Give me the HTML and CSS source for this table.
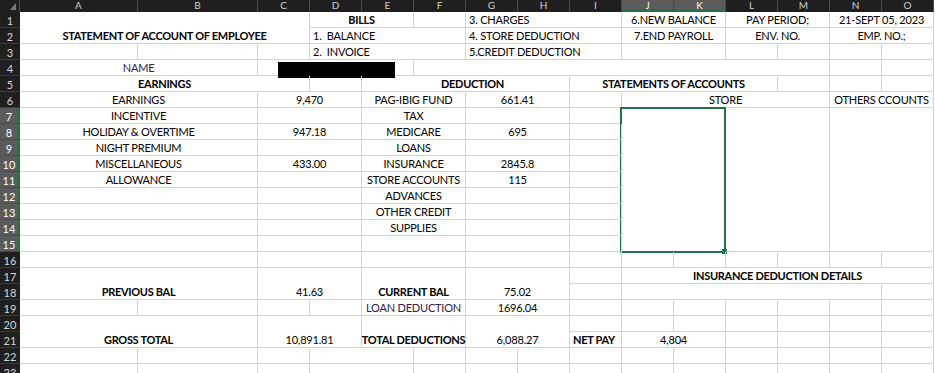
FILE: index.html
```html
<!DOCTYPE html>
<html>
<head>
<meta charset="utf-8">
<link rel="stylesheet" href="styles.css">
</head>
<body>
<div class="sheet">
  <!-- header row -->
  <div class="corner"></div>
  <div class="ch">A</div><div class="ch">B</div><div class="ch">C</div><div class="ch">D</div><div class="ch">E</div><div class="ch">F</div><div class="ch">G</div><div class="ch">H</div><div class="ch">I</div><div class="ch sel">J</div><div class="ch sel">K</div><div class="ch">L</div><div class="ch">M</div><div class="ch">N</div><div class="ch">O</div>

  <!-- row 1 -->
  <div class="rh">1</div>
  <div class="c s3 r2 b">STATEMENT OF ACCOUNT OF EMPLOYEE</div>
  <div class="c s2 b">BILLS</div>
  <div class="c"></div>
  <div class="c s3 l">3. CHARGES</div>
  <div class="c s2">6.NEW BALANCE</div>
  <div class="c s2">PAY PERIOD;</div>
  <div class="c s2">21-SEPT 05, 2023</div>

  <!-- row 2 -->
  <div class="rh">2</div>
  <div class="c s3 l">1.&nbsp; BALANCE</div>
  <div class="c s3 l">4. STORE DEDUCTION</div>
  <div class="c s2">7.END PAYROLL</div>
  <div class="c s2">ENV. NO.</div>
  <div class="c s2">EMP. NO.;</div>

  <!-- row 3 -->
  <div class="rh">3</div>
  <div class="c"></div><div class="c"></div><div class="c"></div>
  <div class="c s3 l">2.&nbsp; INVOICE</div>
  <div class="c s3 l">5.CREDIT DEDUCTION</div>
  <div class="c s2"></div>
  <div class="c"></div><div class="c"></div><div class="c"></div><div class="c"></div>

  <!-- row 4 -->
  <div class="rh">4</div>
  <div class="c s2 purple">NAME</div>
  <div class="c s3 redacted"><span class="blackout"></span></div>
  <div class="c s8"></div>
  <div class="c"></div><div class="c"></div>

  <!-- row 5 -->
  <div class="rh">5</div>
  <div class="c s3 b">EARNINGS</div>
  <div class="c"></div>
  <div class="c s4 b shift">DEDUCTION</div>
  <div class="c s4 b">STATEMENTS OF ACCOUNTS</div>
  <div class="c"></div><div class="c"></div><div class="c"></div>

  <!-- row 6 -->
  <div class="rh">6</div>
  <div class="c s2">EARNINGS</div>
  <div class="c s2">9,470</div>
  <div class="c s2">PAG-IBIG FUND</div>
  <div class="c s2">661.41</div>
  <div class="c"></div>
  <div class="c s4">STORE</div>
  <div class="c s2">OTHERS CCOUNTS</div>

  <!-- row 7 -->
  <div class="rh sel">7</div>
  <div class="c s2">INCENTIVE</div>
  <div class="c s2"></div>
  <div class="c s2">TAX</div>
  <div class="c s2"></div>
  <div class="c"></div>
  <div class="c s2 r9 selbox"></div>
  <div class="c s2 r9"></div>
  <div class="c s2 r9"></div>

  <!-- row 8 -->
  <div class="rh sel">8</div>
  <div class="c s2">HOLIDAY &amp; OVERTIME</div>
  <div class="c s2">947.18</div>
  <div class="c s2">MEDICARE</div>
  <div class="c s2">695</div>
  <div class="c"></div>

  <!-- row 9 -->
  <div class="rh sel">9</div>
  <div class="c s2">NIGHT PREMIUM</div>
  <div class="c s2"></div>
  <div class="c s2">LOANS</div>
  <div class="c s2"></div>
  <div class="c"></div>

  <!-- row 10 -->
  <div class="rh sel">10</div>
  <div class="c s2">MISCELLANEOUS</div>
  <div class="c s2">433.00</div>
  <div class="c s2">INSURANCE</div>
  <div class="c s2">2845.8</div>
  <div class="c"></div>

  <!-- row 11 -->
  <div class="rh sel">11</div>
  <div class="c s2">ALLOWANCE</div>
  <div class="c s2"></div>
  <div class="c s2">STORE ACCOUNTS</div>
  <div class="c s2">115</div>
  <div class="c"></div>

  <!-- row 12 -->
  <div class="rh sel">12</div>
  <div class="c s2"></div>
  <div class="c s2"></div>
  <div class="c s2">ADVANCES</div>
  <div class="c s2"></div>
  <div class="c"></div>

  <!-- row 13 -->
  <div class="rh sel">13</div>
  <div class="c s2"></div>
  <div class="c s2"></div>
  <div class="c s2">OTHER CREDIT</div>
  <div class="c s2"></div>
  <div class="c"></div>

  <!-- row 14 -->
  <div class="rh sel">14</div>
  <div class="c s2"></div>
  <div class="c s2"></div>
  <div class="c s2">SUPPLIES</div>
  <div class="c s2"></div>
  <div class="c"></div>

  <!-- row 15 -->
  <div class="rh sel">15</div>
  <div class="c s2"></div>
  <div class="c s2"></div>
  <div class="c s2"></div>
  <div class="c s2"></div>
  <div class="c"></div>

  <!-- row 16 -->
  <div class="rh">16</div>
  <div class="c s2"></div>
  <div class="c s2"></div>
  <div class="c s2"></div>
  <div class="c s2"></div>
  <div class="c"></div>
  <div class="c"></div><div class="c"></div><div class="c"></div><div class="c"></div><div class="c"></div><div class="c"></div>

  <!-- row 17 -->
  <div class="rh">17</div>
  <div class="c s2 r2 b">PREVIOUS BAL</div>
  <div class="c s2 r2">41.63</div>
  <div class="c s2 r2 b">CURRENT BAL</div>
  <div class="c s2 r2">75.02</div>
  <div class="c"></div>
  <div class="c s6 b">INSURANCE DEDUCTION DETAILS</div>

  <!-- row 18 -->
  <div class="rh">18</div>
  <div class="c"></div>
  <div class="c s5"></div>
  <div class="c"></div>

  <!-- row 19 -->
  <div class="rh">19</div>
  <div class="c"></div><div class="c"></div><div class="c"></div><div class="c"></div>
  <div class="c s2 purple">LOAN DEDUCTION</div>
  <div class="c s2">1696.04</div>
  <div class="c"></div>
  <div class="c"></div><div class="c"></div><div class="c"></div><div class="c"></div><div class="c"></div><div class="c"></div>

  <!-- row 20 -->
  <div class="rh">20</div>
  <div class="c s2 r2 b">GROSS TOTAL</div>
  <div class="c s2 r2">10,891.81</div>
  <div class="c s2 r2 b">TOTAL DEDUCTIONS</div>
  <div class="c s2 r2">6,088.27</div>
  <div class="c"></div>
  <div class="c"></div><div class="c"></div><div class="c"></div><div class="c"></div><div class="c"></div><div class="c"></div>

  <!-- row 21 -->
  <div class="rh">21</div>
  <div class="c l b">NET PAY</div>
  <div class="c s2">4,804</div>
  <div class="c"></div><div class="c"></div><div class="c"></div><div class="c"></div>

  <!-- row 22 -->
  <div class="rh">22</div>
  <div class="c"></div><div class="c"></div><div class="c"></div>
  <div class="c s2"></div>
  <div class="c"></div><div class="c"></div><div class="c"></div><div class="c"></div>
  <div class="c"></div><div class="c"></div><div class="c"></div><div class="c"></div><div class="c"></div><div class="c"></div>

  <!-- row 23 -->
  <div class="rh">23</div>
  <div class="c"></div><div class="c"></div><div class="c"></div>
  <div class="c s2"></div>
  <div class="c"></div><div class="c"></div><div class="c"></div><div class="c"></div>
  <div class="c"></div><div class="c"></div><div class="c"></div><div class="c"></div><div class="c"></div><div class="c"></div>
</div>
</body>
</html>
```

FILE: styles.css
```css
* { box-sizing: border-box; margin: 0; padding: 0; }
html, body { width: 935px; height: 373px; overflow: hidden; background: #ffffff; }
body {
  font-family: Lato, "Open Sans", sans-serif;
  font-size: 11px;
  color: #000000;
}
.sheet {
  display: grid;
  grid-template-columns: 20px 118px 120px repeat(13, 52px);
  grid-template-rows: 12px repeat(23, 16px);
}
.corner {
  background: #1f1f1f;
  position: relative;
  border-right: 1px solid #4a4a4a;
}
.corner::after {
  content: "";
  position: absolute;
  right: 3px;
  bottom: 2px;
  width: 0;
  height: 0;
  border-left: 6px solid transparent;
  border-bottom: 7px solid #7a7a7a;
}
.ch {
  background: #1f1f1f;
  color: #cfcfcf;
  display: flex;
  justify-content: center;
  align-items: flex-start;
  line-height: 10px;
  font-size: 10px;
  border-right: 1px solid #4a4a4a;
}
.ch.sel {
  background: #5b5b5b;
  color: #ffffff;
  border-bottom: 2px solid #217346;
}
.rh {
  background: #1f1f1f;
  color: #d6d6d6;
  display: flex;
  justify-content: center;
  align-items: center;
  font-size: 11px;
  line-height: 15px;
  padding-top: 1px;
  border-bottom: 1px solid #3c3c3c;
}
.rh.sel {
  background: #5b5b5b;
  color: #ffffff;
  border-right: 2px solid #217346;
  border-bottom-color: #4a4a4a;
}
.c {
  border-right: 1px solid #d4d4d4;
  border-bottom: 1px solid #d4d4d4;
  display: flex;
  justify-content: center;
  align-items: flex-end;
  white-space: nowrap;
  line-height: 15px;
  letter-spacing: -0.2px;
  position: relative;
}
.l { justify-content: flex-start; padding-left: 3px; }
.b { font-weight: 700; letter-spacing: -0.3px; }
.purple { color: #35204a; }
.shift { padding-left: 14px; }
.s2 { grid-column: span 2; }
.s3 { grid-column: span 3; }
.s4 { grid-column: span 4; }
.s5 { grid-column: span 5; }
.s6 { grid-column: span 6; }
.s8 { grid-column: span 8; }
.r2 { grid-row: span 2; }
.r9 { grid-row: span 9; }
.blackout {
  position: absolute;
  left: 20px;
  top: 2px;
  width: 117px;
  height: 16px;
  background: #000000;
}
.selbox::before {
  content: "";
  position: absolute;
  left: -2px;
  top: -1px;
  right: -1px;
  bottom: -2px;
  border: 2px solid #217346;
}
.selbox::after {
  content: "";
  position: absolute;
  right: -2px;
  bottom: -3px;
  width: 5px;
  height: 5px;
  background: #217346;
}
```
